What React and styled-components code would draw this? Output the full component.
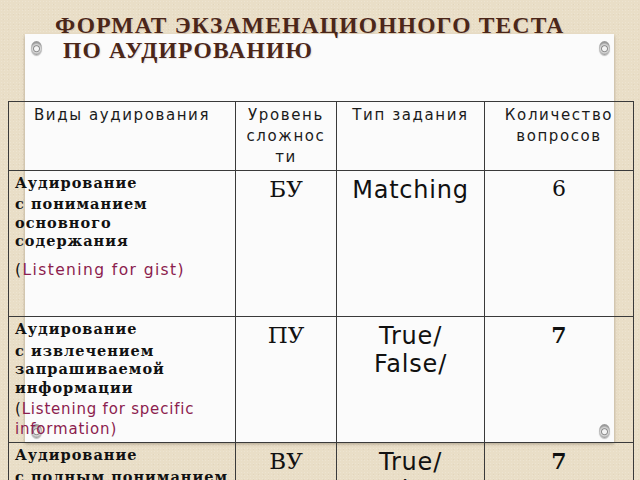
import React from 'react';
import styled, { createGlobalStyle } from 'styled-components';

const GlobalStyle = createGlobalStyle`
  html, body {
    margin: 0;
    padding: 0;
    background: #e8ddc6;
  }
`;

const Slide = styled.div`
  position: relative;
  display: grid;
  width: 640px;
  height: 480px;
  overflow: hidden;
  background-color: #e9dec7;
  background-image:
    radial-gradient(rgba(255, 255, 255, 0.18) 0.5px, transparent 1px),
    radial-gradient(rgba(150, 125, 85, 0.09) 0.5px, transparent 1px);
  background-size: 3px 3px, 5px 5px;
  background-position: 0 0, 1px 2px;
`;

const Paper = styled.div`
  grid-area: 1 / 1;
  align-self: start;
  position: relative;
  height: 408px;
  margin: 34px 26px 0 25px;
  background: #fbfbfb;
  box-shadow: 0 2px 3px rgba(60, 50, 30, 0.35);
`;

const Pin = styled.span`
  position: absolute;
  width: 11px;
  height: 14px;
  border-radius: 50%;
  background: radial-gradient(circle at 50% 55%, #f4f4f4 0 2px, #8d8d8d 3px, #d8d8d8 4px, #9a9a9a 6px);
  box-shadow: 0 1px 1px rgba(0, 0, 0, 0.25);
  ${(p) => (p.top ? 'top: 7px;' : 'bottom: 4px;')}
  ${(p) => (p.left ? 'left: 6px;' : 'right: 4px;')}
`;

const Content = styled.div`
  grid-area: 1 / 1;
  position: relative;
  z-index: 1;
  padding-top: 13px;
`;

const Title = styled.h1`
  margin: 0;
  padding-left: ${(p) => p.indent}px;
  font-family: "Liberation Serif", "Times New Roman", serif;
  font-size: 23.5px;
  font-weight: bold;
  line-height: 25px;
  letter-spacing: 1.2px;
  color: #4b2619;
  text-shadow: 1px 1px 1px rgba(120, 90, 70, 0.15);
  white-space: nowrap;
`;

const Table = styled.table`
  margin: 38px 0 0 8px;
  width: 625px;
  border-collapse: collapse;
  table-layout: fixed;
  font-family: "DejaVu Sans", sans-serif;
  color: #111;
`;

const HeadCell = styled.th`
  height: 64.5px;
  padding: 3px 0 0;
  border: 1.5px solid #3a3a3a;
  vertical-align: top;
  text-align: center;
  font-weight: normal;
  font-size: 15px;
  line-height: 21px;
  letter-spacing: 1.6px;
  color: #1a1a1a;
  white-space: nowrap;
`;

const Cell = styled.td`
  height: ${(p) => p.h}px;
  padding: ${(p) => (p.side ? '3px 2px 0 6px' : '5px 0 0')};
  border: 1.5px solid #3a3a3a;
  vertical-align: top;
  text-align: ${(p) => (p.side ? 'left' : 'center')};
`;

const Kind = styled.div`
  font-family: "DejaVu Serif", serif;
  font-weight: bold;
  font-size: 14.5px;
  line-height: 18.5px;
  letter-spacing: 1px;
  color: #111;
  white-space: nowrap;
  & + & {
    margin-top: 3px;
  }
`;

const English = styled.div`
  margin-top: ${(p) => p.gap}px;
  font-size: ${(p) => p.size}px;
  line-height: 20px;
  letter-spacing: ${(p) => p.spacing}px;
  color: #111;

  span {
    color: #8c1d4e;
  }
`;

const Level = styled.div`
  font-family: "DejaVu Serif", serif;
  font-size: 23px;
  line-height: 26px;
`;

const TaskType = styled.div`
  font-size: 24px;
  line-height: 28px;
  letter-spacing: 0.8px;
`;

const Count = styled.div`
  font-family: "DejaVu Serif", serif;
  font-size: 22px;
  line-height: 26px;
  font-weight: ${(p) => (p.bold ? 'bold' : 'normal')};
`;

const rows = [
  {
    h: 140.5,
    kind: ['с пониманием', 'основного', 'содержания'],
    english: 'Listening for gist',
    gap: 9,
    size: 15.5,
    spacing: 1.4,
    level: 'БУ',
    task: ['Matching'],
    count: '6',
  },
  {
    h: 120,
    kind: ['с извлечением', 'запрашиваемой', 'информации'],
    english: 'Listening for specific information',
    gap: 2,
    size: 15,
    spacing: 0.8,
    level: 'ПУ',
    task: ['True/', 'False/'],
    count: '7',
    bold: true,
  },
  {
    h: 110,
    kind: ['с полным пониманием'],
    english: 'Listening for detail',
    gap: 2,
    size: 15,
    spacing: 0.8,
    level: 'ВУ',
    task: ['True/', 'False/'],
    count: '7',
    bold: true,
  },
];

export default function App() {
  return (
    <>
      <GlobalStyle />
      <Slide>
        <Paper>
          <Pin top left />
          <Pin top />
          <Pin left />
          <Pin />
        </Paper>
        <Content>
          <Title indent={55}>ФОРМАТ ЭКЗАМЕНАЦИОННОГО ТЕСТА</Title>
          <Title indent={63}>ПО АУДИРОВАНИЮ</Title>
          <Table>
            <colgroup>
              <col style={{ width: 227 }} />
              <col style={{ width: 101 }} />
              <col style={{ width: 148 }} />
              <col style={{ width: 149 }} />
            </colgroup>
            <thead>
              <tr>
                <HeadCell>Виды аудирования</HeadCell>
                <HeadCell>
                  Уровень
                  <br />
                  сложнос
                  <br />
                  ти
                </HeadCell>
                <HeadCell>Тип задания</HeadCell>
                <HeadCell>
                  Количество
                  <br />
                  вопросов
                </HeadCell>
              </tr>
            </thead>
            <tbody>
              {rows.map((r) => (
                <tr key={r.level}>
                  <Cell side h={r.h}>
                    <Kind>Аудирование</Kind>
                    <Kind>
                      {r.kind.map((k) => (
                        <div key={k}>{k}</div>
                      ))}
                    </Kind>
                    <English gap={r.gap} size={r.size} spacing={r.spacing}>
                      (<span>{r.english})</span>
                    </English>
                  </Cell>
                  <Cell h={r.h}>
                    <Level>{r.level}</Level>
                  </Cell>
                  <Cell h={r.h}>
                    {r.task.map((t) => (
                      <TaskType key={t}>{t}</TaskType>
                    ))}
                  </Cell>
                  <Cell h={r.h}>
                    <Count bold={r.bold}>{r.count}</Count>
                  </Cell>
                </tr>
              ))}
            </tbody>
          </Table>
        </Content>
      </Slide>
    </>
  );
}
